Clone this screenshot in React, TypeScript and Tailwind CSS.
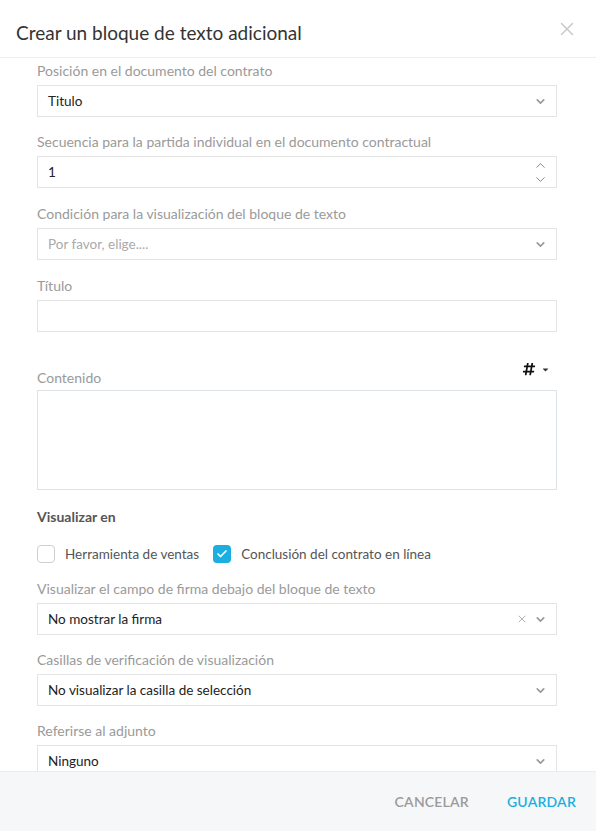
import { ChevronDown, ChevronUp, X, Check } from 'lucide-react';
import { FaHashtag, FaCaretDown } from 'react-icons/fa';

const FONT = "font-['Lato','Noto_Sans',sans-serif]";

function Label({ children }: { children: React.ReactNode }) {
  return <div className="text-[14px] leading-5 text-[#9a9a9a] mb-1">{children}</div>;
}

function Select({ value, placeholder, clearable }: { value?: string; placeholder?: string; clearable?: boolean }) {
  return (
    <div className="h-[32px] border border-[#e4e4e4] bg-white flex items-center pl-[10px] pr-[9px]">
      <span className={value ? 'flex-1 text-[13.5px] text-[#222]' : 'flex-1 text-[13.5px] text-[#aaa]'}>
        {value ?? placeholder}
      </span>
      {clearable && <X className="w-[12px] h-[12px] text-[#aaa] mr-[6px]" strokeWidth={1.8} />}
      <ChevronDown className="w-[13px] h-[13px] text-[#999]" strokeWidth={3} />
    </div>
  );
}

export default function App() {
  return (
    <div className={`${FONT} w-[596px] h-[831px] bg-white flex flex-col overflow-hidden`}>
      <div className="h-[58px] shrink-0 border-b border-[#eeeeee] flex items-center justify-between pl-[16px] pr-[18px]">
        <h1 className="text-[19px] text-[#333] pt-[10px]">Crear un bloque de texto adicional</h1>
        <X className="w-[22px] h-[22px] text-[#c9c9c9]" strokeWidth={1.6} />
      </div>

      <div className="flex-1 overflow-hidden pl-[37px] pr-[39px] pt-[3px]">
        <Label>Posición en el documento del contrato</Label>
        <Select value="Titulo" />

        <div className="mt-[15px]">
          <Label>Secuencia para la partida individual en el documento contractual</Label>
          <div className="h-[32px] border border-[#e4e4e4] flex items-center pl-[10px] pr-[8px]">
            <span className="flex-1 text-[13.5px] text-[#222]">1</span>
            <div className="flex flex-col -space-y-[1px]">
              <ChevronUp className="w-[15px] h-[15px] text-[#888]" strokeWidth={1.6} />
              <ChevronDown className="w-[15px] h-[15px] text-[#888]" strokeWidth={1.6} />
            </div>
          </div>
        </div>

        <div className="mt-[16px]">
          <Label>Condición para la visualización del bloque de texto</Label>
          <Select placeholder="Por favor, elige...." />
        </div>

        <div className="mt-[16px]">
          <Label>Título</Label>
          <div className="h-[32px] border border-[#e4e4e4]" />
        </div>

        <div className="mt-[36px]">
          <div className="flex justify-between">
            <Label>Contenido</Label>
            <div className="self-start -mt-[9px] flex items-center gap-[5px] pr-[7px] h-[20px]">
              <FaHashtag className="w-[14px] h-[14px] text-[#111]" />
              <FaCaretDown className="w-[9px] h-[9px] text-[#333]" />
            </div>
          </div>
          <div className="h-[100px] border border-[#dde3e6] -mt-[2px]" />
        </div>

        <div className="mt-[17px] text-[14px] leading-5 font-bold text-[#555]">Visualizar en</div>

        <div className="mt-[17px] flex items-center h-[20px]">
          <div className="w-[18px] h-[18px] rounded-[4px] border border-[#cfcfcf] bg-white" />
          <span className="ml-[10px] text-[13.5px] text-[#555]">Herramienta de ventas</span>
          <div className="ml-[14px] w-[18px] h-[18px] rounded-[4px] bg-[#1aafe0] flex items-center justify-center">
            <Check className="w-[12px] h-[12px] text-white" strokeWidth={3.5} />
          </div>
          <span className="ml-[10px] text-[13.5px] text-[#555]">Conclusión del contrato en línea</span>
        </div>

        <div className="mt-[15px]">
          <Label>Visualizar el campo de firma debajo del bloque de texto</Label>
          <Select value="No mostrar la firma" clearable />
        </div>

        <div className="mt-[15px]">
          <Label>Casillas de verificación de visualización</Label>
          <Select value="No visualizar la casilla de selección" />
        </div>

        <div className="mt-[15px]">
          <Label>Referirse al adjunto</Label>
          <Select value="Ninguno" />
        </div>
      </div>

      <div className="h-[60px] shrink-0 bg-[#f6f7f8] border-t border-[#ececec] flex items-center justify-end gap-[38px] pr-[20px]">
        <button className="text-[14px] font-semibold tracking-[0.2px] text-[#9b9b9b]">CANCELAR</button>
        <button className="text-[14px] font-semibold tracking-[0.2px] text-[#1aafe0]">GUARDAR</button>
      </div>
    </div>
  );
}
